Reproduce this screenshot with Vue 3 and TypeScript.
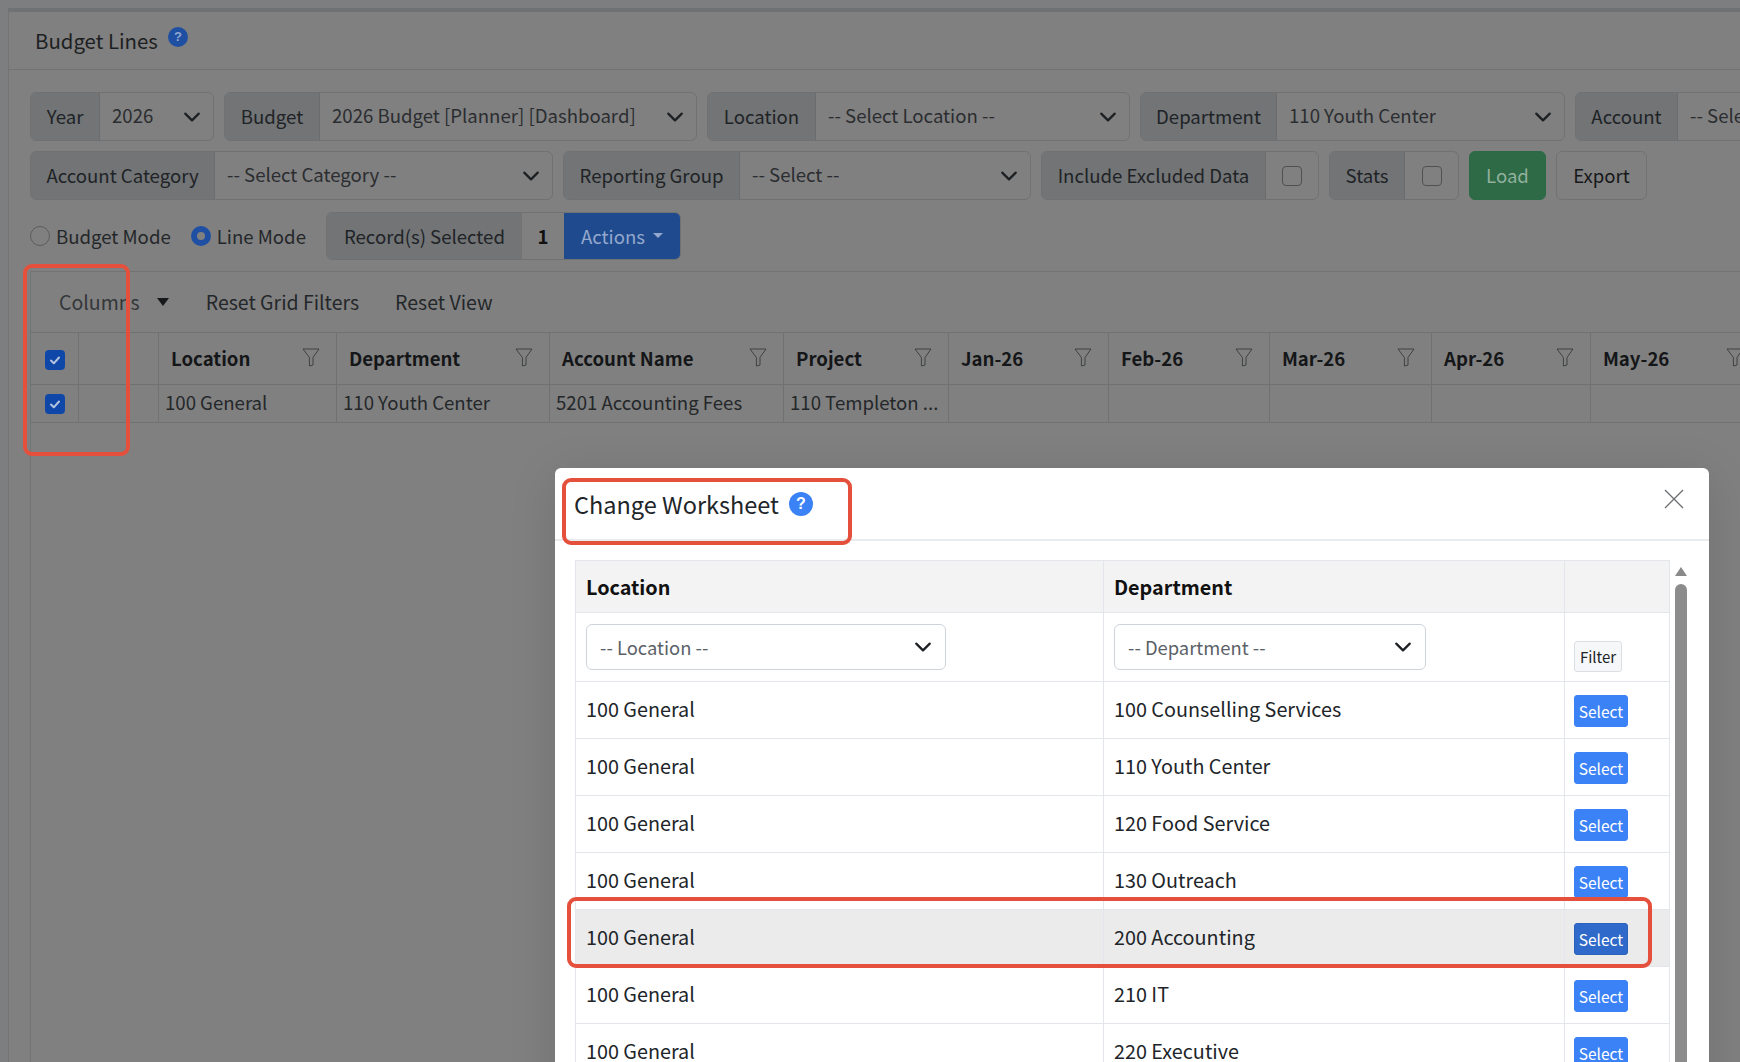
<script setup lang="ts">
interface FilterGroup {
  label: string
  value?: string
  labelW: number
  width: number
  check?: boolean
}

const topFilters: FilterGroup[] = [
  { label: 'Year', value: '2026', labelW: 69, width: 184 },
  { label: 'Budget', value: '2026 Budget [Planner] [Dashboard]', labelW: 95, width: 473 },
  { label: 'Location', value: '-- Select Location --', labelW: 108, width: 423 },
  { label: 'Department', value: '110 Youth Center', labelW: 136, width: 425 },
  { label: 'Account', value: '-- Select Account --', labelW: 102, width: 300 }
]

const secondFilters: FilterGroup[] = [
  { label: 'Account Category', value: '-- Select Category --', labelW: 184, width: 523 },
  { label: 'Reporting Group', value: '-- Select --', labelW: 176, width: 468 },
  { label: 'Include Excluded Data', labelW: 224, width: 278, check: true },
  { label: 'Stats', labelW: 75, width: 130, check: true }
]

const gridCols = [48, 80, 178, 213, 234, 165, 160, 161, 162, 159, 170]
const gridHeads = ['Location', 'Department', 'Account Name', 'Project', 'Jan-26', 'Feb-26', 'Mar-26', 'Apr-26', 'May-26']
const gridRow = ['100 General', '110 Youth Center', '5201 Accounting Fees', '110 Templeton ...', '', '', '', '', '']

const departments = [
  '100 Counselling Services',
  '110 Youth Center',
  '120 Food Service',
  '130 Outreach',
  '200 Accounting',
  '210 IT',
  '220 Executive'
]
</script>

<template>
  <div class="page">
    <div class="card">
      <div class="card-head">
        <span>Budget Lines</span>
        <span class="help help-dim">?</span>
      </div>
      <div class="card-body">
        <div class="filter-row">
          <div v-for="f in topFilters" :key="f.label" class="group" :style="{ width: f.width + 'px' }">
            <div class="group-label" :style="{ width: f.labelW + 'px' }">{{ f.label }}</div>
            <div class="group-select">
              <span class="group-value">{{ f.value }}</span>
              <svg class="chevron" viewBox="0 0 16 16"><path d="M2 5l6 6 6-6" /></svg>
            </div>
          </div>
        </div>

        <div class="filter-row">
          <div v-for="f in secondFilters" :key="f.label" class="group" :style="{ width: f.width + 'px' }">
            <div class="group-label" :style="{ width: f.labelW + 'px' }">{{ f.label }}</div>
            <div v-if="f.check" class="group-check"><span class="box"></span></div>
            <div v-else class="group-select">
              <span class="group-value">{{ f.value }}</span>
              <svg class="chevron" viewBox="0 0 16 16"><path d="M2 5l6 6 6-6" /></svg>
            </div>
          </div>
          <button class="btn btn-load">Load</button>
          <button class="btn btn-export">Export</button>
        </div>

        <div class="mode-row">
          <span class="radio"></span>
          <span class="mode-label first">Budget Mode</span>
          <span class="radio on"></span>
          <span class="mode-label">Line Mode</span>
          <div class="records">
            <div class="records-label">Record(s) Selected</div>
            <div class="records-count">1</div>
            <div class="records-actions">Actions<i class="mini-caret"></i></div>
          </div>
        </div>

        <div class="grid-panel">
          <div class="grid-tools">
            <span class="tool tool-cols">Columns</span>
            <i class="tool-caret"></i>
            <span class="tool tool-reset">Reset Grid Filters</span>
            <span class="tool tool-view">Reset View</span>
          </div>
          <table class="grid">
            <colgroup>
              <col v-for="(w, i) in gridCols" :key="i" :style="{ width: w + 'px' }" />
            </colgroup>
            <thead>
              <tr>
                <th class="cell-check">
                  <span class="tick">
                    <svg viewBox="0 0 16 16"><path d="M4 8.5l2.8 2.8L12 5.5" /></svg>
                  </span>
                </th>
                <th></th>
                <th v-for="h in gridHeads" :key="h">
                  <div class="th-inner">
                    <span>{{ h }}</span>
                    <svg class="funnel" viewBox="0 0 18 19">
                      <path d="M1 1h16l-6 8.5V17l-3.6 1V9.5z" />
                    </svg>
                  </div>
                </th>
                <th></th>
              </tr>
            </thead>
            <tbody>
              <tr>
                <td class="cell-check">
                  <span class="tick">
                    <svg viewBox="0 0 16 16"><path d="M4 8.5l2.8 2.8L12 5.5" /></svg>
                  </span>
                </td>
                <td></td>
                <td v-for="(c, i) in gridRow" :key="i">{{ c }}</td>
                <td></td>
              </tr>
            </tbody>
          </table>
        </div>
      </div>
    </div>

    <div class="modal">
      <div class="modal-head">
        <span class="modal-title">Change Worksheet</span>
        <span class="help help-modal">?</span>
        <svg class="close" viewBox="0 0 20 20"><path d="M1 1l18 18M19 1L1 19" /></svg>
      </div>
      <div class="modal-body">
        <table class="pick">
          <colgroup>
            <col class="pick-a" />
            <col class="pick-b" />
            <col class="pick-c" />
          </colgroup>
          <thead>
            <tr class="pick-head">
              <th>Location</th>
              <th>Department</th>
              <th></th>
            </tr>
          </thead>
          <tbody>
            <tr class="pick-filter">
              <td>
                <div class="pick-select loc">
                  <span>-- Location --</span>
                  <svg class="chevron" viewBox="0 0 16 16"><path d="M2 5l6 6 6-6" /></svg>
                </div>
              </td>
              <td>
                <div class="pick-select dep">
                  <span>-- Department --</span>
                  <svg class="chevron" viewBox="0 0 16 16"><path d="M2 5l6 6 6-6" /></svg>
                </div>
              </td>
              <td class="pick-action"><button class="btn-filter">Filter</button></td>
            </tr>
            <tr v-for="d in departments" :key="d" class="pick-row" :class="{ hover: d === '200 Accounting' }">
              <td>100 General</td>
              <td>{{ d }}</td>
              <td class="pick-action"><button class="btn-select">Select</button></td>
            </tr>
          </tbody>
        </table>
        <div class="scroll">
          <i class="scroll-up"></i>
          <div class="scroll-thumb"></div>
        </div>
      </div>
    </div>

    <div class="mark mark-cols"></div>
    <div class="mark mark-title"></div>
    <div class="mark mark-row"></div>
  </div>
</template>

<style>
html,
body {
  margin: 0;
  overflow: hidden;
}
</style>

<style scoped>
.page {
  position: relative;
  width: 1740px;
  height: 1062px;
  overflow: hidden;
  box-sizing: border-box;
  padding: 8px 0 0 8px;
  background: #7c7e80;
  font-family: "Noto Sans CJK SC", "Noto Sans", sans-serif;
  color: #202326;
  font-size: 18.6px;
}

.card {
  width: 1800px;
  height: 1100px;
  background: #808080;
  border-left: 1px solid #727476;
  border-top: 4px solid #6f7174;
  box-sizing: border-box;
}

.card-head {
  height: 58px;
  box-sizing: border-box;
  border-bottom: 1px solid #707274;
  padding: 15px 0 0 26px;
  display: flex;
  align-items: flex-start;
  gap: 10px;
  font-size: 20.4px;
  line-height: 26px;
  color: #1d1f22;
}

.help {
  display: flex;
  align-items: center;
  justify-content: center;
  border-radius: 50%;
  color: #fff;
  font-weight: 700;
  font-family: "Liberation Sans", sans-serif;
}

.help-dim {
  width: 20px;
  height: 20px;
  background: #1f4fa3;
  font-size: 13px;
  color: #8fa6cf;
}

.card-body {
  padding: 22px 0 0 21px;
}

.filter-row {
  display: flex;
  gap: 10px;
  margin-bottom: 10px;
  white-space: nowrap;
}

.group {
  display: flex;
  flex: none;
  height: 49px;
  box-sizing: border-box;
  border: 1px solid #6f7173;
  border-radius: 6px;
  overflow: hidden;
}

.group-label {
  flex: none;
  box-sizing: border-box;
  background: #727476;
  border-right: 1px solid #6a6c6e;
  display: flex;
  align-items: center;
  justify-content: center;
  line-height: 1;
  padding-bottom: 1px;
}

.group-select {
  flex: 1;
  min-width: 0;
  display: flex;
  align-items: center;
  justify-content: space-between;
  padding: 0 12px;
  color: #2b2d30;
}

.group-value {
  overflow: hidden;
  margin-top: -4px;
}

.chevron {
  flex: none;
  width: 18px;
  height: 18px;
  fill: none;
  stroke: #1d2023;
  stroke-width: 2;
  stroke-linecap: round;
  stroke-linejoin: round;
}

.group-check {
  flex: 1;
  display: flex;
  align-items: center;
  justify-content: center;
}

.box {
  width: 20px;
  height: 20px;
  box-sizing: border-box;
  border: 1px solid #4e5052;
  border-radius: 4px;
}

.btn {
  height: 49px;
  font: inherit;
  border-radius: 6px;
  background: transparent;
  padding: 0 0 2px;
  flex: none;
}

.btn-load {
  width: 77px;
  border: 1px solid #2c6a45;
  background: #2d6a45;
  color: #93b09e;
}

.btn-export {
  width: 91px;
  border: 1px solid #6f7173;
  color: #16181a;
}

.mode-row {
  display: flex;
  align-items: center;
  height: 48px;
  margin-top: 12px;
}

.radio {
  flex: none;
  width: 20px;
  height: 20px;
  box-sizing: border-box;
  border: 1px solid #5a5c5e;
  border-radius: 50%;
}

.radio.on {
  border: 6px solid #1f4fa3;
  background: #808080;
}

.mode-label {
  margin-left: 6px;
  line-height: 1;
  color: #24272a;
}

.mode-label.first {
  margin-right: 20px;
}

.records {
  display: flex;
  height: 48px;
  margin-left: 20px;
  border-radius: 6px;
  overflow: hidden;
  box-sizing: border-box;
  border: 1px solid #6f7173;
}

.records-label {
  width: 195px;
  padding-bottom: 2px;
  box-sizing: border-box;
  background: #727476;
  display: flex;
  align-items: center;
  justify-content: center;
}

.records-count {
  width: 42px;
  padding-bottom: 2px;
  box-sizing: border-box;
  display: flex;
  align-items: center;
  justify-content: center;
  font-weight: 700;
  color: #111;
}

.records-actions {
  width: 116px;
  padding-bottom: 2px;
  box-sizing: border-box;
  background: #1f4a8e;
  color: #93a8cc;
  display: flex;
  align-items: center;
  justify-content: center;
  gap: 8px;
}

.mini-caret {
  border-top: 5px solid #93a8cc;
  border-left: 5px solid transparent;
  border-right: 5px solid transparent;
}

.grid-panel {
  margin-top: 11px;
  height: 800px;
  border-top: 1px solid #717375;
  border-left: 1px solid #717375;
}

.grid-tools {
  height: 60px;
  display: flex;
  align-items: center;
  padding-left: 28px;
  line-height: 1;
  font-size: 19.5px;
}

.tool {
  color: #24272a;
}

.tool-cols {
  color: #333638;
}

.tool-caret {
  margin-left: 17px;
  border-top: 8px solid #16181a;
  border-left: 6px solid transparent;
  border-right: 6px solid transparent;
}

.tool-reset {
  margin-left: 37px;
}

.tool-view {
  margin-left: 36px;
}

.grid {
  table-layout: fixed;
  width: 1752px;
  margin-left: -1px;
  border-collapse: collapse;
}

.grid th,
.grid td {
  box-sizing: border-box;
  border: 1px solid #6f7173;
  padding: 0;
  overflow: hidden;
  white-space: nowrap;
}

.grid th {
  height: 52px;
  text-align: left;
  font-weight: 700;
  color: #141618;
}

.grid td {
  height: 38px;
  padding: 0 6px 5px;
  color: #24272a;
}

.grid .cell-check {
  padding: 0 0 0 14px;
}

.grid th.cell-check .tick {
  margin-top: 2px;
}

.tick {
  display: flex;
  align-items: center;
  justify-content: center;
  width: 20px;
  height: 20px;
  border-radius: 4px;
  background: #0f47a8;
}

.tick svg {
  width: 16px;
  height: 16px;
  fill: none;
  stroke: #b4c4de;
  stroke-width: 2;
  stroke-linecap: round;
  stroke-linejoin: round;
}

.th-inner {
  display: flex;
  align-items: center;
  justify-content: space-between;
  padding: 0 16px 0 12px;
  margin-top: -2px;
}

.funnel {
  flex: none;
  width: 18px;
  height: 19px;
  fill: none;
  stroke: #3f4143;
  stroke-width: 1;
  stroke-linejoin: round;
}

.modal {
  position: absolute;
  left: 555px;
  top: 468px;
  width: 1154px;
  height: 640px;
  background: #fff;
  border-radius: 6px;
  box-shadow: 0 8px 48px rgba(0, 0, 0, 0.12);
}

.modal-head {
  position: relative;
  height: 73px;
  box-sizing: border-box;
  border-bottom: 2px solid #e9ecef;
  display: flex;
  align-items: flex-start;
  padding: 19px 0 0 19px;
  gap: 10px;
}

.modal-title {
  font-size: 23.5px;
  line-height: 34px;
  color: #212529;
}

.help-modal {
  width: 24px;
  height: 24px;
  margin-top: 5px;
  background: #3b82f6;
  font-size: 16px;
}

.close {
  position: absolute;
  left: 1109px;
  top: 21px;
  width: 20px;
  height: 20px;
  fill: none;
  stroke: #6a6e72;
  stroke-width: 1.3;
}

.modal-body {
  display: flex;
  padding: 19px 0 0 20px;
}

.pick {
  table-layout: fixed;
  width: 1094px;
  flex: none;
  border-collapse: collapse;
  align-self: flex-start;
}

.pick-a {
  width: 528px;
}

.pick-b {
  width: 461px;
}

.pick-c {
  width: 105px;
}

.pick th,
.pick td {
  box-sizing: border-box;
  border: 1px solid #e3e6ea;
  padding: 0 10px;
  text-align: left;
  font-size: 19.8px;
  color: #212529;
}

.pick-head th {
  height: 52px;
  background: #f3f3f4;
  font-weight: 700;
  color: #111;
}

.pick-filter td {
  height: 69px;
}

.pick-select {
  height: 46px;
  box-sizing: border-box;
  border: 1px solid #ced4da;
  border-radius: 6px;
  display: flex;
  align-items: center;
  justify-content: space-between;
  padding: 0 13px;
  font-size: 18.4px;
  color: #5b6168;
}

.pick-select.loc {
  width: 360px;
}

.pick-select.dep {
  width: 312px;
}

.pick-row td {
  height: 57px;
  padding-bottom: 3px;
}

.pick-row.hover td {
  background: #ebebeb;
}

.pick-action {
  vertical-align: bottom;
}

.pick .pick-action {
  padding: 0 0 9px 9px;
}

.btn-filter {
  display: block;
  width: 48px;
  height: 31px;
  padding: 0 0 1px;
  border: 1px solid #dcdfe2;
  border-radius: 3px;
  background: #f6f7f8;
  color: #212529;
  font: 15px "Noto Sans CJK SC", sans-serif;
}

.btn-select {
  display: block;
  width: 54px;
  height: 32px;
  padding: 0;
  border: 1px solid #3b82f6;
  border-radius: 3px;
  background: #3b82f6;
  color: #fff;
  font: 15.5px "Noto Sans CJK SC", sans-serif;
}

.pick-row.hover .btn-select {
  background: #2f69c9;
  border-color: #2c62bb;
}

.pick-row .pick-action {
  padding-bottom: 11px;
}

.scroll {
  position: relative;
  flex: none;
  width: 19px;
  margin-left: 2px;
}

.scroll-up {
  position: absolute;
  left: 3px;
  top: 7px;
  border-bottom: 9px solid #8a8a8a;
  border-left: 6px solid transparent;
  border-right: 6px solid transparent;
}

.scroll-thumb {
  position: absolute;
  left: 3px;
  top: 24px;
  width: 12px;
  height: 520px;
  border-radius: 6px;
  background: #8c8c8c;
}

.mark {
  position: absolute;
  box-sizing: border-box;
  border: 4px solid #e5503c;
  border-radius: 9px;
}

.mark-cols {
  left: 23px;
  top: 264px;
  width: 107px;
  height: 192px;
}

.mark-title {
  left: 562px;
  top: 478px;
  width: 290px;
  height: 67px;
}

.mark-row {
  left: 567px;
  top: 897px;
  width: 1085px;
  height: 71px;
}
</style>
